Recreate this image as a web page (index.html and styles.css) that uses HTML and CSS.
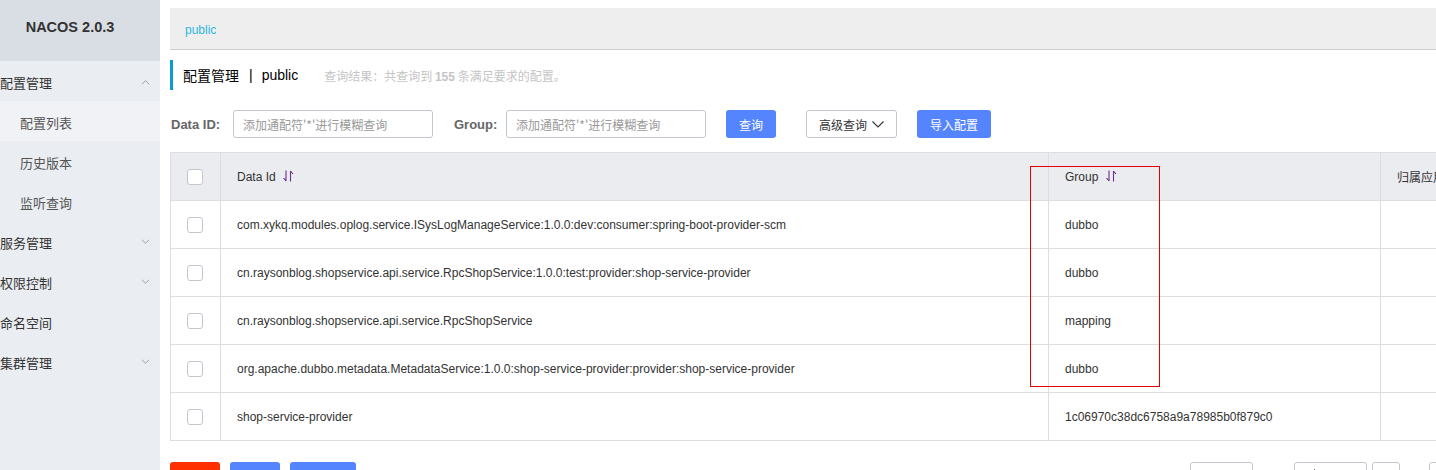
FILE: index.html
```html
<!DOCTYPE html>
<html lang="zh-CN">
<head>
<meta charset="utf-8">
<title>Nacos</title>
<link rel="stylesheet" href="styles.css">
</head>
<body>
<div class="app">
  <aside class="sidebar">
    <div class="side-inner">
      <div class="logo">NACOS 2.0.3</div>
      <ul class="menu">
        <li class="item top"><span>配置管理</span><svg class="arr" viewBox="0 0 10 6" width="9" height="6"><path d="M1 5.5L5 1.5L9 5.5" fill="none" stroke="#999" stroke-width="1"/></svg></li>
        <li class="item sub active"><span>配置列表</span></li>
        <li class="item sub"><span>历史版本</span></li>
        <li class="item sub"><span>监听查询</span></li>
        <li class="item top"><span>服务管理</span><svg class="arr" viewBox="0 0 10 6" width="9" height="6"><path d="M1 0.5L5 4.5L9 0.5" fill="none" stroke="#999" stroke-width="1"/></svg></li>
        <li class="item top"><span>权限控制</span><svg class="arr" viewBox="0 0 10 6" width="9" height="6"><path d="M1 0.5L5 4.5L9 0.5" fill="none" stroke="#999" stroke-width="1"/></svg></li>
        <li class="item top"><span>命名空间</span></li>
        <li class="item top"><span>集群管理</span><svg class="arr" viewBox="0 0 10 6" width="9" height="6"><path d="M1 0.5L5 4.5L9 0.5" fill="none" stroke="#999" stroke-width="1"/></svg></li>
      </ul>
    </div>
  </aside>
  <main class="main">
    <div class="crumb"><span class="ns">public</span></div>
    <div class="title">
      <span class="title-text">配置管理</span><span class="sep">|</span><span class="title-ns">public</span>
      <span class="result">查询结果：共查询到 <b>155</b> 条满足要求的配置。</span>
    </div>
    <div class="search">
      <label class="lbl">Data ID:</label>
      <div class="input">添加通配符'*'进行模糊查询</div>
      <label class="lbl lbl-group">Group:</label>
      <div class="input">添加通配符'*'进行模糊查询</div>
      <button class="btn primary btn-query">查询</button>
      <button class="btn normal btn-adv">高级查询 <svg viewBox="0 0 12 7" width="12" height="7"><path d="M0.5 0.5L6 6L11.5 0.5" fill="none" stroke="#333" stroke-width="1.1"/></svg></button>
      <button class="btn primary btn-import">导入配置</button>
    </div>
    <div class="table-wrap">
      <table class="grid">
        <colgroup><col class="c-chk"><col class="c-id"><col class="c-group"><col class="c-app"></colgroup>
        <thead>
          <tr>
            <th><span class="chk"></span></th>
            <th>Data Id <svg class="sort" viewBox="0 0 11 12" width="11" height="12"><path d="M3 0.5V11M3 11L0.5 8" fill="none" stroke="#6b2f8f" stroke-width="1.1"/><path d="M7.5 11.5V1M7.5 1L10 4" fill="none" stroke="#6b2f8f" stroke-width="1.1"/></svg></th>
            <th>Group <svg class="sort" viewBox="0 0 11 12" width="11" height="12"><path d="M3 0.5V11M3 11L0.5 8" fill="none" stroke="#6b2f8f" stroke-width="1.1"/><path d="M7.5 11.5V1M7.5 1L10 4" fill="none" stroke="#6b2f8f" stroke-width="1.1"/></svg></th>
            <th>归属应用</th>
          </tr>
        </thead>
        <tbody>
          <tr><td><span class="chk"></span></td><td>com.xykq.modules.oplog.service.ISysLogManageService:1.0.0:dev:consumer:spring-boot-provider-scm</td><td>dubbo</td><td></td></tr>
          <tr><td><span class="chk"></span></td><td>cn.raysonblog.shopservice.api.service.RpcShopService:1.0.0:test:provider:shop-service-provider</td><td>dubbo</td><td></td></tr>
          <tr><td><span class="chk"></span></td><td>cn.raysonblog.shopservice.api.service.RpcShopService</td><td>mapping</td><td></td></tr>
          <tr><td><span class="chk"></span></td><td>org.apache.dubbo.metadata.MetadataService:1.0.0:shop-service-provider:provider:shop-service-provider</td><td>dubbo</td><td></td></tr>
          <tr><td><span class="chk"></span></td><td>shop-service-provider</td><td>1c06970c38dc6758a9a78985b0f879c0</td><td></td></tr>
        </tbody>
      </table>
      <div class="mark"></div>
    </div>
    <div class="footer">
      <div class="actions">
        <span class="fbtn red"></span>
        <span class="fbtn blue w50"></span>
        <span class="fbtn blue w66"></span>
      </div>
      <div class="pager">
        <span class="pbox p1"></span>
        <span class="pbox p2"><i class="dot"></i></span>
        <span class="pbox p3"></span>
        <span class="pbox p4"></span>
      </div>
    </div>
  </main>
</div>
</body>
</html>
```
FILE: styles.css
```css
* { box-sizing: border-box; }
html, body { margin: 0; padding: 0; }
body {
  width: 1436px;
  height: 470px;
  overflow: hidden;
  background: #fff;
  font-family: "Liberation Sans", Arial, "Noto Sans CJK SC", sans-serif;
  color: #333;
}
.app { display: flex; height: 470px; }

.sidebar {
  width: 160px;
  flex: none;
  overflow: hidden;
  background: #eaedf1;
}
.side-inner { width: 180px; margin-left: -20px; }
.logo {
  height: 61px;
  background: #d9dde4;
  text-align: center;
  font-weight: bold;
  font-size: 14.5px;
  line-height: 54px;
  color: #333;
  font-family: "Liberation Sans", Arial, sans-serif;
}
.menu { list-style: none; margin: 0; padding: 0; }
.item {
  height: 40px;
  display: flex;
  align-items: center;
  justify-content: space-between;
  font-size: 13px;
  padding-right: 10px;
  padding-top: 2px;
  font-family: "Noto Sans CJK SC", sans-serif;
}
.item.top { padding-left: 20px; color: #333; }
.item.sub { padding-left: 40px; color: #555; }
.item.active { background: #f1f2f5; }
.arr { display: block; }

.main {
  flex: 1;
  min-width: 0;
  overflow: hidden;
  padding-left: 10px;
}
.crumb {
  margin-top: 8px;
  height: 42px;
  background: #eeeeee;
  border-bottom: 1px solid #cccccc;
  padding-left: 15px;
  display: flex;
  align-items: center;
  width: 1300px;
}
.ns { color: #2fb7de; font-size: 12px; padding-top: 2px; }

.title {
  margin-top: 10px;
  height: 30px;
  border-left: 3px solid #0c9ad2;
  padding-left: 10px;
  display: flex;
  align-items: center;
}
.title-text { font-size: 14px; color: #000; font-family: "Noto Sans CJK SC", sans-serif; }
.sep { font-size: 14px; color: #000; margin: 0 9px 0 10px; }
.title-ns { font-size: 14px; color: #000; }
.result { margin-left: 26px; font-size: 12px; color: #c5c5c5; font-family: "Noto Sans CJK SC", sans-serif; }
.result b { font-family: "Liberation Sans", sans-serif; }

.search {
  margin-top: 20px;
  height: 28px;
  display: flex;
  align-items: center;
}
.lbl {
  font-size: 13px;
  font-weight: bold;
  color: #666;
  padding-left: 1px;
  width: 63px;
}
.lbl-group { margin-left: 20px; width: 53px; }
.input {
  width: 200px;
  height: 28px;
  border: 1px solid #c4c6cf;
  border-radius: 3px;
  font-size: 12px;
  color: #999;
  padding-left: 9px;
  display: flex;
  align-items: center;
  font-family: "Noto Sans CJK SC", sans-serif;
}
.btn {
  height: 28px;
  border-radius: 3px;
  font-size: 12px;
  font-family: "Noto Sans CJK SC", sans-serif;
  padding: 0;
  display: flex;
  align-items: center;
  justify-content: center;
}
.primary { background: #5584ff; color: #fff; border: none; }
.normal { background: #fff; color: #333; border: 1px solid #c4c6cf; gap: 5px; }
.btn-query { width: 50px; margin-left: 20px; }
.btn-adv { width: 91px; margin-left: 30px; }
.btn-import { width: 74px; margin-left: 20px; }

.table-wrap { position: relative; margin-top: 14px; }
.grid {
  border-collapse: collapse;
  table-layout: fixed;
  width: 1420px;
  font-size: 12px;
  font-family: "Liberation Sans", Arial, "Noto Sans CJK SC", sans-serif;
}
.c-chk { width: 50px; }
.c-id { width: 828px; }
.c-group { width: 332px; }
.c-app { width: 210px; }
.grid th, .grid td {
  height: 48px;
  border: 1px solid #dcdee3;
  padding: 0 16px;
  text-align: left;
  white-space: nowrap;
  overflow: hidden;
  color: #333;
}
.grid th { background: #ebecf0; font-weight: normal; }
.grid th:first-child, .grid td:first-child { padding: 0 0 0 16px; }
.sort { vertical-align: -1px; margin-left: 4px; }
.chk {
  display: block;
  width: 16px;
  height: 16px;
  border: 1px solid #c4c6cf;
  border-radius: 3px;
  background: #fff;
}
.mark {
  position: absolute;
  left: 860px;
  top: 14px;
  width: 130px;
  height: 221px;
  border: 1px solid #e60000;
  pointer-events: none;
}

.footer {
  margin-top: 21px;
  display: flex;
  width: 1300px;
}
.actions { display: flex; gap: 10px; }
.fbtn { display: block; height: 28px; border-radius: 3px; }
.red { width: 50px; background: #ff3000; }
.blue { background: #5584ff; }
.w50 { width: 50px; }
.w66 { width: 66px; }
.pager { display: flex; margin-left: auto; width: 280px; }
.pbox { display: block; height: 28px; border: 1px solid #c4c6cf; border-radius: 3px; position: relative; }
.p1 { width: 63px; margin-left: 0; }
.p2 { width: 73px; margin-left: 41px; }
.p3 { width: 28px; margin-left: 5px; }
.p4 { width: 20px; margin-left: 29px; }
.dot { position: absolute; left: 19px; top: 6px; width: 1px; height: 2px; background: #555; }
```
